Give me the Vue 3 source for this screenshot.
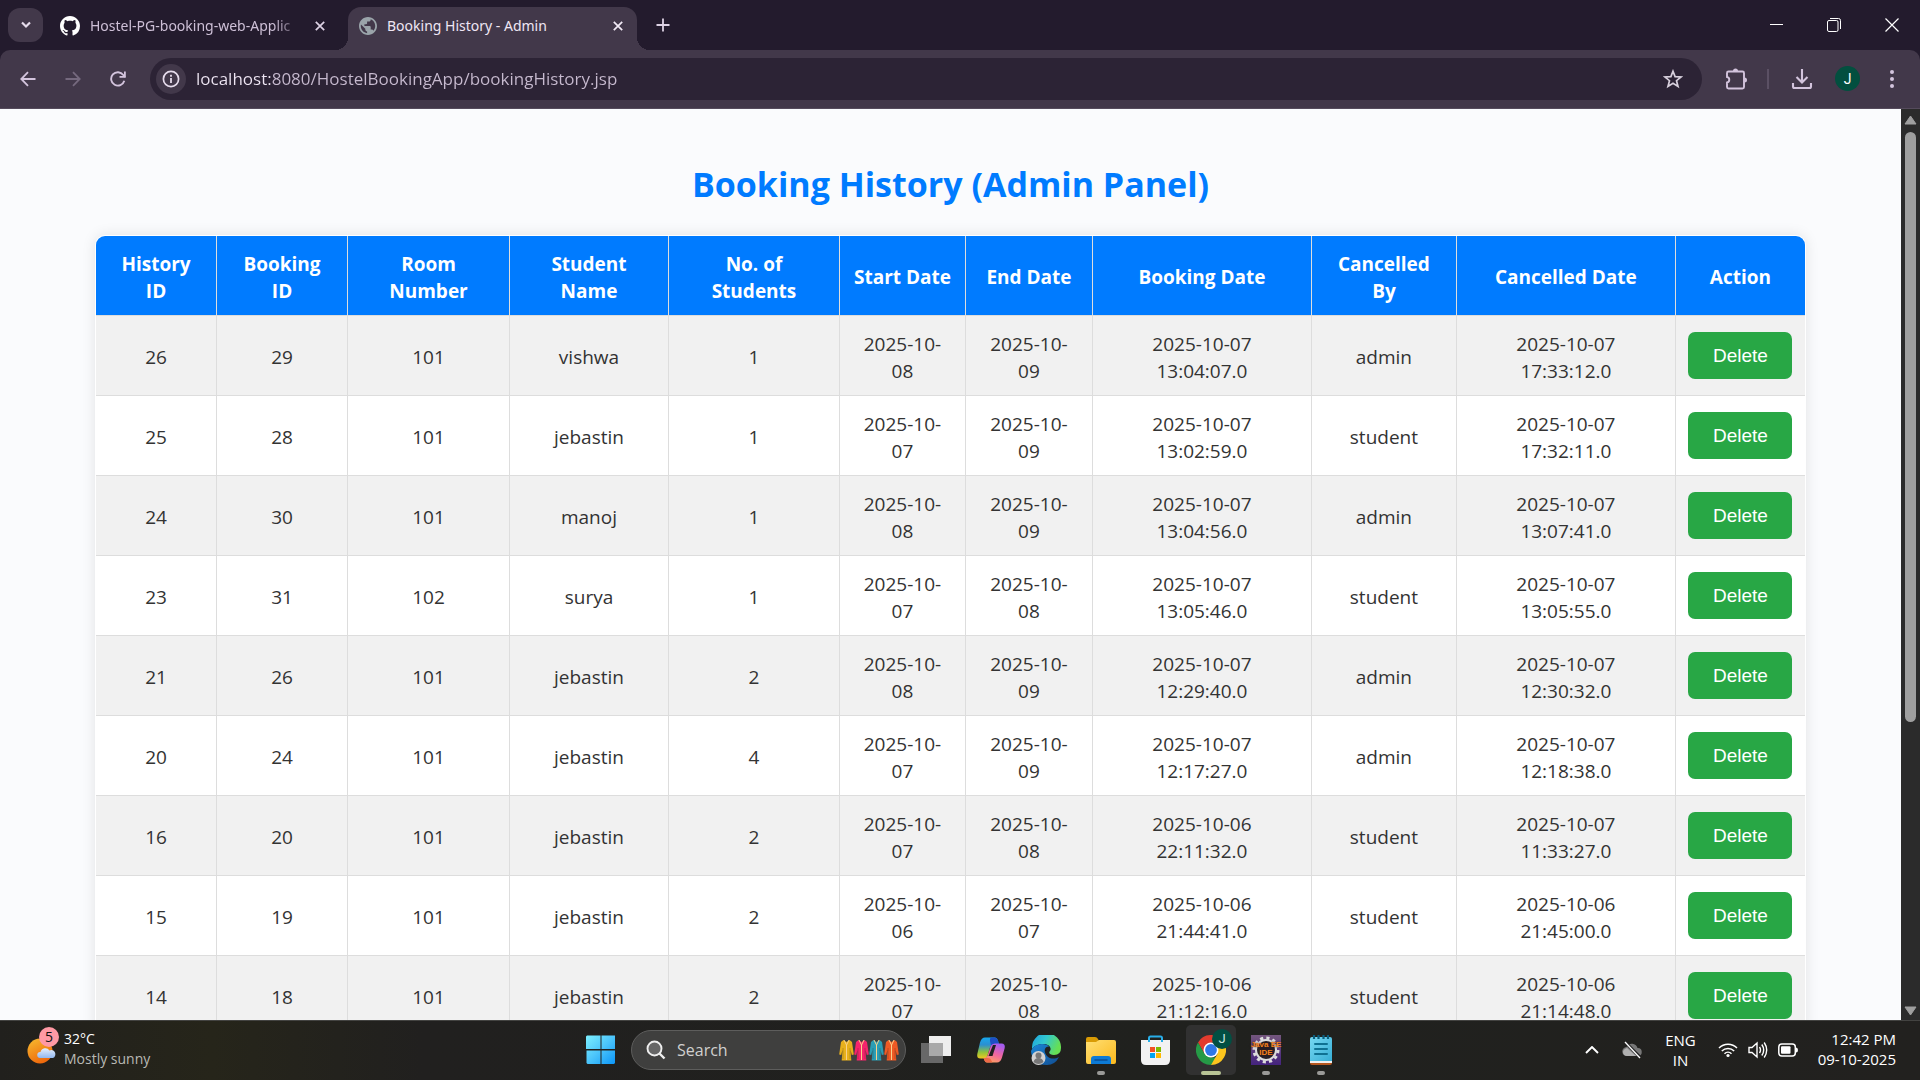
<script setup>
const columns = [
  { label: 'History ID', width: 121 },
  { label: 'Booking ID', width: 131 },
  { label: 'Room Number', width: 162 },
  { label: 'Student Name', width: 159 },
  { label: 'No. of Students', width: 171 },
  { label: 'Start Date', width: 126 },
  { label: 'End Date', width: 127 },
  { label: 'Booking Date', width: 219 },
  { label: 'Cancelled By', width: 145 },
  { label: 'Cancelled Date', width: 219 },
  { label: 'Action', width: 129 },
]
const total = columns.reduce((sum, c) => sum + c.width, 0)

const bookings = [
  [26, 29, 101, 'vishwa', 1, '2025-10-08', '2025-10-09', '2025-10-07 13:04:07.0', 'admin', '2025-10-07 17:33:12.0'],
  [25, 28, 101, 'jebastin', 1, '2025-10-07', '2025-10-09', '2025-10-07 13:02:59.0', 'student', '2025-10-07 17:32:11.0'],
  [24, 30, 101, 'manoj', 1, '2025-10-08', '2025-10-09', '2025-10-07 13:04:56.0', 'admin', '2025-10-07 13:07:41.0'],
  [23, 31, 102, 'surya', 1, '2025-10-07', '2025-10-08', '2025-10-07 13:05:46.0', 'student', '2025-10-07 13:05:55.0'],
  [21, 26, 101, 'jebastin', 2, '2025-10-08', '2025-10-09', '2025-10-07 12:29:40.0', 'admin', '2025-10-07 12:30:32.0'],
  [20, 24, 101, 'jebastin', 4, '2025-10-07', '2025-10-09', '2025-10-07 12:17:27.0', 'admin', '2025-10-07 12:18:38.0'],
  [16, 20, 101, 'jebastin', 2, '2025-10-07', '2025-10-08', '2025-10-06 22:11:32.0', 'student', '2025-10-07 11:33:27.0'],
  [15, 19, 101, 'jebastin', 2, '2025-10-06', '2025-10-07', '2025-10-06 21:44:41.0', 'student', '2025-10-06 21:45:00.0'],
  [14, 18, 101, 'jebastin', 2, '2025-10-07', '2025-10-08', '2025-10-06 21:12:16.0', 'student', '2025-10-06 21:14:48.0'],
]

const outfits = ['#e8b01c', '#f5246c', '#2b9db4', '#ee5a24']
const url = 'localhost:8080/HostelBookingApp/bookingHistory.jsp'
</script>

<template>
  <div class="desktop">
    <header class="tabstrip">
      <button class="tab-search" aria-label="Search tabs">
        <svg width="12" height="8" viewBox="0 0 12 8"><path d="M2 1.5 6 5.5l4-4" fill="none" stroke="#e6dcec" stroke-width="2.2" /></svg>
      </button>
      <div class="tab">
        <svg width="20" height="20" viewBox="0 0 16 16" fill="#fff"><path d="M8 0C3.58 0 0 3.58 0 8c0 3.54 2.29 6.53 5.47 7.59.4.07.55-.17.55-.38 0-.19-.01-.82-.01-1.49-2.01.37-2.53-.49-2.69-.94-.09-.23-.48-.94-.82-1.13-.28-.15-.68-.52-.01-.53.63-.01 1.08.58 1.23.82.72 1.21 1.87.87 2.33.66.07-.52.28-.87.51-1.07-1.78-.2-3.64-.89-3.64-3.95 0-.87.31-1.59.82-2.15-.08-.2-.36-1.02.08-2.12 0 0 .67-.21 2.2.82.64-.18 1.32-.27 2-.27s1.36.09 2 .27c1.53-1.04 2.2-.82 2.2-.82.44 1.1.16 1.92.08 2.12.51.56.82 1.27.82 2.15 0 3.07-1.87 3.75-3.65 3.95.29.25.54.73.54 1.48 0 1.07-.01 1.93-.01 2.2 0 .21.15.46.55.38A8.01 8.01 0 0 0 16 8c0-4.42-3.58-8-8-8z" /></svg>
        <span class="tab-title faded">Hostel-PG-booking-web-Applic</span>
        <button class="plain" aria-label="Close tab"><svg width="10" height="10" viewBox="0 0 10 10"><path d="m.8.8 8.4 8.4M9.2.8.8 9.2" stroke="#ddd2e4" stroke-width="1.7" /></svg></button>
      </div>
      <div class="tab active">
        <svg width="18" height="18" viewBox="2 2 20 20" fill="#9aa4aa"><path d="M12 2C6.48 2 2 6.48 2 12s4.48 10 10 10 10-4.48 10-10S17.52 2 12 2zm-1 17.93c-3.95-.49-7-3.85-7-7.93 0-.62.08-1.21.21-1.79L9 15v1c0 1.1.9 2 2 2v1.93zm6.9-2.54c-.26-.81-1-1.39-1.9-1.39h-1v-3c0-.55-.45-1-1-1H8v-2h2c.55 0 1-.45 1-1V7h2c1.1 0 2-.9 2-2v-.41c2.93 1.19 5 4.06 5 7.41 0 2.08-.8 3.97-2.1 5.39z" /></svg>
        <span class="tab-title">Booking History - Admin</span>
        <button class="plain" aria-label="Close tab"><svg width="10" height="10" viewBox="0 0 10 10"><path d="m.8.8 8.4 8.4M9.2.8.8 9.2" stroke="#f2eaf6" stroke-width="1.7" /></svg></button>
      </div>
      <button class="plain new-tab" aria-label="New tab"><svg width="14" height="14" viewBox="0 0 14 14"><path d="M7 .5v13M.5 7h13" stroke="#ddd2e4" stroke-width="1.8" /></svg></button>
      <div class="window-controls">
        <button class="plain" aria-label="Minimize"><svg width="13" height="13" viewBox="0 0 13 13"><path d="M0 5.5h13" stroke="#fff" /></svg></button>
        <button class="plain" aria-label="Restore"><svg width="14" height="14" viewBox="0 0 14 14" fill="none" stroke="#fff"><rect x=".5" y="2.5" width="10.5" height="11" rx="1.5" /><path d="M3 .5h8.5a2 2 0 0 1 2 2V11" /></svg></button>
        <button class="plain" aria-label="Close"><svg width="14" height="14" viewBox="0 0 14 14"><path d="m.5.5 13 13m0-13-13 13" stroke="#fff" stroke-width="1.2" /></svg></button>
      </div>
    </header>

    <nav class="toolbar">
      <div class="nav-buttons">
        <button class="plain" aria-label="Back"><svg width="16" height="16" viewBox="0 0 16 16"><path d="M15.5 8H1.5M8 1.2 1.3 8 8 14.8" fill="none" stroke="#d3c4dd" stroke-width="1.8" /></svg></button>
        <button class="plain" aria-label="Forward"><svg width="16" height="16" viewBox="0 0 16 16"><path d="M.5 8h14M8 1.2 14.7 8 8 14.8" fill="none" stroke="#75697e" stroke-width="1.8" /></svg></button>
        <button class="plain" aria-label="Reload"><svg width="16" height="16" viewBox="0 0 16 16"><path d="M14.3 9.8A6.7 6.7 0 1 1 13.3 4L15 6" fill="none" stroke="#d3c4dd" stroke-width="1.9" /><path d="M15.8.5v6.3H9.5V5H14V.5z" fill="#d3c4dd" /></svg></button>
      </div>
      <div class="omnibox">
        <button class="site-info" aria-label="Site information"><svg width="18" height="18" viewBox="0 0 18 18"><circle cx="9" cy="9" r="7.6" fill="none" stroke="#e6dcec" stroke-width="1.7" /><path d="M9 8v5M9 4.8v1.9" stroke="#e6dcec" stroke-width="1.8" /></svg></button>
        <input class="url" type="text" aria-label="Address" :value="url" />
        <button class="plain" aria-label="Bookmark"><svg width="20" height="20" viewBox="0 0 20 20"><path d="m10 2.2 2.1 5.4 5.9.4-4.5 3.7 1.5 5.7-5-3.2-5 3.2 1.5-5.7L2 8l5.9-.4z" fill="none" stroke="#d8d0dd" stroke-width="1.7" /></svg></button>
      </div>
      <div class="tools">
        <button class="plain" aria-label="Extensions"><svg width="22" height="22" viewBox="0 0 22 22"><path d="M3.500 3.500h14A1.500 1.500 0 0 1 19 5v14a1.500 1.500 0 0 1-1.500 1.500h-14A1.500 1.500 0 0 1 2 19v-4.500a2.800 2.800 0 0 0 0-5.500V5a1.500 1.500 0 0 1 1.500-1.500z" fill="none" stroke="#d3c4dd" stroke-width="1.900" /><path d="M8 3a2.500 2.500 0 0 1 5 0zM19.500 9.500a2.500 2.500 0 0 1 0 5z" fill="#d3c4dd" /></svg></button>
        <span class="divider"></span>
        <button class="plain" aria-label="Downloads"><svg width="22" height="22" viewBox="0 0 22 22"><path d="M11 1v13M5.5 9l5.5 5.5L16.5 9M2 15v3.500A1.500 1.500 0 0 0 3.500 20h15a1.500 1.500 0 0 0 1.500-1.500V15" fill="none" stroke="#d3c4dd" stroke-width="2.1" /></svg></button>
        <button class="avatar" aria-label="Profile">J</button>
        <button class="plain" aria-label="Menu"><svg width="4" height="20" viewBox="0 0 4 20" fill="#d3c4dd"><circle cx="2" cy="3" r="2" /><circle cx="2" cy="10" r="2" /><circle cx="2" cy="17" r="2" /></svg></button>
      </div>
    </nav>

    <div class="viewport">
      <main class="page">
        <h2>Booking History (Admin Panel)</h2>
        <div class="card">
          <table>
            <colgroup>
              <col v-for="c in columns" :key="c.label" :style="{ width: (c.width / total) * 100 + '%' }" />
            </colgroup>
            <thead>
              <tr><th v-for="c in columns" :key="c.label" scope="col">{{ c.label }}</th></tr>
            </thead>
            <tbody>
              <tr v-for="row in bookings" :key="row[0]">
                <td v-for="(cell, i) in row" :key="i">{{ cell }}</td>
                <td class="action"><button class="delete">Delete</button></td>
              </tr>
            </tbody>
          </table>
        </div>
      </main>
      <div class="scrollbar" aria-hidden="true">
        <svg width="13" height="10" viewBox="0 0 13 10"><path d="M6.5 1 12 9H1z" fill="#9f9f9f" stroke="#9f9f9f" stroke-linejoin="round" /></svg>
        <div class="track"><div class="thumb"></div></div>
        <svg width="13" height="10" viewBox="0 0 13 10"><path d="M6.5 9 1 1h11z" fill="#9f9f9f" stroke="#9f9f9f" stroke-linejoin="round" /></svg>
      </div>
    </div>

    <footer class="taskbar">
      <div class="weather">
        <div class="weather-icon">
          <svg width="30" height="36" viewBox="0 0 30 36">
            <defs>
              <linearGradient id="sun" x1="0" y1="0" x2=".5" y2="1"><stop offset="0" stop-color="#f8bd30" /><stop offset="1" stop-color="#ee690c" /></linearGradient>
              <linearGradient id="cloud" x1="0" y1="0" x2="0" y2="1"><stop offset="0" stop-color="#e6effc" /><stop offset="1" stop-color="#92b8ee" /></linearGradient>
            </defs>
            <circle cx="13" cy="22" r="12.5" fill="url(#sun)" />
            <path d="M13 29a3 3 0 0 1 .5-6 5 5 0 0 1 9-1.500 3.800 3.800 0 0 1 3.500 7.500z" fill="url(#cloud)" />
          </svg>
          <span class="badge">5</span>
        </div>
        <div class="weather-text"><span>32°C</span><span class="dim">Mostly sunny</span></div>
      </div>

      <div class="apps">
        <button class="app" aria-label="Start">
          <svg width="30" height="30" viewBox="0 0 30 30">
            <defs><linearGradient id="win" x1="0" y1="0" x2="1" y2="1"><stop offset="0" stop-color="#7df0ff" /><stop offset=".5" stop-color="#4cc5fb" /><stop offset="1" stop-color="#0c96f8" /></linearGradient></defs>
            <path d="M1 .5h13.500V14H0V1.500zM15.500.5H29v13.500H15.500zM.5 15.500h14V29H1.500l-1-1zM15.500 15.500H29V28l-1 1H15.500z" fill="url(#win)" />
          </svg>
        </button>
        <label class="search">
          <svg width="20" height="20" viewBox="0 0 20 20"><circle cx="8.5" cy="8.5" r="7" fill="#666" stroke="#eee" stroke-width="1.9" /><path d="m13.5 13.5 5 5" stroke="#eee" stroke-width="2.4" /></svg>
          <input type="text" placeholder="Search" aria-label="Search" />
          <span class="outfits">
            <svg v-for="color in outfits" :key="color" width="15" height="22" viewBox="0 0 15 22">
              <path d="M4.500 1 7.500 3l3-2 2.500 2 1.800 12.500-2 .5-1.200-5 .7 10.500H2.700L3.400 11l-1.200 5-2-.5L2 3z" :fill="color" />
              <path d="m5 1 2.500 5L10 1M7.500 6v15" fill="none" stroke="#f8d28c" stroke-width="1" />
              <path d="M4 9v11M11 9v11" stroke="#000" stroke-opacity=".18" />
            </svg>
          </span>
        </label>
        <button class="app" aria-label="Task view">
          <svg width="30" height="30" viewBox="0 0 30 30"><path d="M8 1h22v20H8z" fill="#eee" /><path d="M0 8h22v20H0z" fill="#686868" /><path d="M8 8h14v13H8z" fill="#a9a9a9" /></svg>
        </button>
        <button class="app" aria-label="Copilot">
          <svg width="30" height="30" viewBox="0 0 30 30">
            <defs>
              <linearGradient id="cpa" x1="0" y1="0" x2="0" y2="1"><stop offset="0" stop-color="#17a8ee" /><stop offset=".35" stop-color="#2b8fd0" /><stop offset=".7" stop-color="#8fc43c" /><stop offset="1" stop-color="#f0c820" /></linearGradient>
              <linearGradient id="cpb" x1=".6" y1="0" x2=".2" y2="1"><stop offset="0" stop-color="#a45cf0" /><stop offset=".5" stop-color="#f0669f" /><stop offset="1" stop-color="#ffa85c" /></linearGradient>
            </defs>
            <path d="M9 2.500h10q2 0 3 3l1 4h-5q-3 0-4 3l-2.500 8q-.8 3-3.500 3H4.500q-4 0-3.200-4.500L4 7.500q1.500-5 5-5" fill="url(#cpa)" />
            <path d="M15 2.500h4q2 0 3 3l1 4h-5q-2 0-3 1.500L14 6q-.5-3 1-3.500" fill="#1d4fc4" />
            <path d="M21 27.500H11q-2 0-2.500-2l-.8-2.500q3 .3 4-3l3-9Q16 8.500 19 8.500h6.500q4 0 3.200 4.500L26 22.500q-1.500 5-5 5" fill="url(#cpb)" />
            <path d="M17 10h3l-3.500 11h-4z" fill="#1f211e" />
            <path d="M7.500 23h4q2 0 3 1l2 3.500H11q-2 0-2.500-2z" fill="#ee6a48" />
          </svg>
        </button>
        <button class="app" aria-label="Edge">
          <svg width="30" height="30" viewBox="0 0 30 30">
            <defs>
              <linearGradient id="edt" x1="0" y1="0" x2="1" y2=".4"><stop offset="0" stop-color="#1c9fe0" /><stop offset=".5" stop-color="#32c8cf" /><stop offset="1" stop-color="#66df54" /></linearGradient>
              <linearGradient id="edb" x1="0" y1="0" x2="1" y2="1"><stop offset="0" stop-color="#1b87d8" /><stop offset="1" stop-color="#114d91" /></linearGradient>
            </defs>
            <path d="M1 12A14.500 14.500 0 0 1 30 13q0 7-7 7c-4 0-6-2-4-4 2-3-1-7-6-7-6 0-10 2-12 5z" fill="url(#edt)" />
            <path d="M0 16q3-7 11-7 6 0 7 3c-3-1-5 2-4 5.500 1.500 5.500 8 8 14 4.500q-4 8-12 8Q1 30 0 16" fill="url(#edb)" />
            <circle cx="7.500" cy="23" r="7" fill="#d2d2d2" /><circle cx="7.500" cy="20.500" r="3" fill="#777" /><path d="M2.500 27q1-4 5-4t5 4a7 7 0 0 1-10 0" fill="#777" />
          </svg>
        </button>
        <button class="app running" aria-label="File Explorer">
          <svg width="30" height="30" viewBox="0 0 30 30">
            <defs><linearGradient id="fold" x1="0" y1="0" x2="1" y2="1"><stop offset="0" stop-color="#ffdf74" /><stop offset="1" stop-color="#fbb91d" /></linearGradient></defs>
            <path d="M0 4q0-2 2-2h7q2 0 3 2l1 2h15v6H0z" fill="#d99b05" /><path d="M13 5h15q2 0 2 2v20q0 2-2 2H2q-2 0-2-2V7h10z" fill="url(#fold)" />
            <path d="M5 29v-5q0-3 3-3h14q3 0 3 3v5z" fill="#0d7bd6" /><path d="M9 25h12" stroke="#0a4f96" stroke-width="1.5" stroke-linecap="round" />
          </svg>
        </button>
        <button class="app" aria-label="Microsoft Store">
          <svg width="30" height="30" viewBox="0 0 30 30">
            <path d="M0 5h29v20q0 5-5 5H5q-5 0-5-5z" fill="#f2f2f2" /><path d="M8 7V3q0-1.500 1.500-1.500h10Q21 1.500 21 3v4" fill="none" stroke="#28aee8" stroke-width="2" />
            <path d="M9 12h5v5H9z" fill="#f25022" /><path d="M15 12h5v5h-5z" fill="#7fba00" /><path d="M9 18h5v5H9z" fill="#00a4ef" /><path d="M15 18h5v5h-5z" fill="#ffb900" />
          </svg>
        </button>
        <button class="app running current" aria-label="Chrome">
          <svg width="30" height="30" viewBox="0 0 30 30">
            <path d="M2 7.500a15 15 0 0 1 26 0H15L8.500 18.700z" fill="#e33b2e" /><path d="M2 7.500 8.500 18.700 15 22.500h6.500L15 30A15 15 0 0 1 2 7.500" fill="#259a46" /><path d="M28 7.500A15 15 0 0 1 15 30l6.500-11.300V7.500z" fill="#fcc51d" />
            <circle cx="15" cy="15" r="7.5" fill="#fff" /><circle cx="15" cy="15" r="5.9" fill="#2f78e8" />
          </svg>
          <span class="profile-badge">J</span>
        </button>
        <button class="app running" aria-label="Java EE IDE">
          <span class="java">
            <svg width="30" height="30" viewBox="0 0 30 30">
              <defs><linearGradient id="jee" x1="0" y1="0" x2="0" y2="1"><stop offset="0" stop-color="#74567d" /><stop offset="1" stop-color="#44237e" /></linearGradient></defs>
              <path d="M0 0h30v30H0z" fill="url(#jee)" /><circle cx="15" cy="15" r="12" fill="none" stroke="#ddd" stroke-width="3" stroke-dasharray="3.14 3.14" /><circle cx="15" cy="15" r="10" fill="#282028" stroke="#ddd" stroke-width="2" />
            </svg>
            <span class="java-text">Java EE<br />IDE</span>
          </span>
        </button>
        <button class="app running" aria-label="Notepad">
          <svg width="30" height="30" viewBox="0 0 30 30">
            <defs><linearGradient id="note" x1="0" y1="0" x2="1" y2="1"><stop offset="0" stop-color="#77d8f2" /><stop offset="1" stop-color="#37aed5" /></linearGradient></defs>
            <path d="M4 25h22v3q0 2-2 2H6q-2 0-2-2z" fill="#b4561e" /><path d="M4 22h22v6H4z" fill="#eee" /><path d="M4 4q0-2 2-2h18q2 0 2 2v22H4z" fill="url(#note)" />
            <path d="M8 0v4M12.500 0v4M17.500 0v4M22 0v4" stroke="#0b5d7c" stroke-width="2.2" /><path d="M9 9h12M9 14h12M9 19h12" stroke="#0f7192" stroke-width="2" stroke-linecap="round" />
          </svg>
        </button>
      </div>

      <div class="tray">
        <svg width="14" height="8" viewBox="0 0 14 8"><path d="m1 7 6-6 6 6" fill="none" stroke="#fff" stroke-width="1.9" /></svg>
        <svg class="onedrive" width="20" height="18" viewBox="0 0 20 18"><path d="M5 15a4.500 4.500 0 0 1-.5-9 6 6 0 0 1 11 1A4 4 0 0 1 16 15z" fill="#777" /><path d="M2 14q-3-5 3-7l9 8H5q-2 0-3-1" fill="#b0b0b0" /><path d="m3 1 15 15" stroke="#222" stroke-width="3" /><path d="m3 1 15 16" stroke="#fff" stroke-width="1.3" /></svg>
        <div class="lang"><span>ENG</span><span>IN</span></div>
        <div class="status">
          <svg width="20" height="16" viewBox="0 0 20 16" fill="none" stroke="#fff" stroke-width="1.5"><path d="M1 6a12.500 12.500 0 0 1 18 0M3.800 9a8.800 8.800 0 0 1 12.400 0M6.500 11.700a5 5 0 0 1 7 0" /><circle cx="10" cy="13.5" r="1.6" fill="#fff" stroke="none" /></svg>
          <svg width="20" height="18" viewBox="0 0 20 18" fill="none" stroke="#fff" stroke-width="1.4"><path d="M1 6.500h3L9 2v14l-5-4.500H1zM11.500 6q2 3 0 6M13.800 3.500q3.800 5.500 0 11M16.200 1.500q5 7.500 0 15" /></svg>
          <svg width="20" height="14" viewBox="0 0 20 14"><rect x=".8" y="1" width="16.5" height="12" rx="3" fill="none" stroke="#fff" stroke-width="1.5" /><rect x="3" y="3.2" width="9.5" height="7.6" rx="1" fill="#fff" /><path d="M18 4.500q2 0 2 2.500t-2 2.500z" fill="#fff" /></svg>
        </div>
        <div class="clock"><span>12:42 PM</span><span>09-10-2025</span></div>
      </div>
    </footer>
  </div>
</template>

<style>
body {
  margin: 0;
  overflow: hidden;
}
</style>

<style scoped>
.desktop {
  display: flex;
  flex-direction: column;
  height: 100vh;
  background: #231b2d;
  font-family: "Segoe UI", "Open Sans", "Noto Sans", sans-serif;
}
* {
  box-sizing: border-box;
}
svg {
  display: block;
  flex: none;
}
button {
  font-family: inherit;
  border: 0;
  padding: 0;
}
.plain {
  display: flex;
  background: none;
}

/* Tab strip */
.tabstrip {
  display: flex;
  align-items: center;
  flex: none;
  height: 50px;
  padding-left: 8px;
}
.tab-search {
  display: flex;
  align-items: center;
  justify-content: center;
  width: 35px;
  height: 34px;
  border-radius: 12px;
  background: #42384a;
}
.tab {
  display: flex;
  align-items: center;
  gap: 10px;
  align-self: flex-end;
  height: 43px;
  width: 305px;
  padding: 0 23px 6px 17px;
  color: #cdbfd6;
  font-family: "Segoe UI", "Noto Sans", "Open Sans", sans-serif;
  font-size: 14px;
}
.tab-title {
  flex: 1;
  overflow: hidden;
  white-space: nowrap;
}
.faded {
  mask-image: linear-gradient(to right, #000 85%, transparent);
}
.tab.active {
  position: relative;
  width: 289px;
  padding: 0 14px 6px 11px;
  border-radius: 13px 13px 0 0;
  background: #42384a;
  color: #efe6f4;
}
.tab.active::before,
.tab.active::after {
  content: "";
  position: absolute;
  bottom: 0;
  width: 13px;
  height: 13px;
}
.tab.active::before {
  right: 100%;
  background: radial-gradient(circle at 0 0, transparent 13px, #42384a 13px);
}
.tab.active::after {
  left: 100%;
  background: radial-gradient(circle at 100% 0, transparent 13px, #42384a 13px);
}
.new-tab {
  margin-left: 19px;
}
.window-controls {
  display: flex;
  align-items: center;
  gap: 44px;
  margin-left: auto;
  padding-right: 21px;
}

/* Toolbar */
.toolbar {
  display: flex;
  align-items: center;
  flex: none;
  height: 59px;
  padding: 0 26px 1px 20px;
  border-radius: 10px 10px 0 0;
  border-bottom: 1px solid #554b5c;
  background: #42384a;
}
.nav-buttons {
  display: flex;
  gap: 29px;
  margin-right: 24px;
}
.omnibox {
  display: flex;
  align-items: center;
  flex: 1;
  height: 42px;
  padding: 0 19px 0 6px;
  border-radius: 21px;
  background: #2c2335;
}
.site-info {
  display: flex;
  align-items: center;
  justify-content: center;
  width: 30px;
  height: 30px;
  border-radius: 50%;
  background: #42384a;
}
.url {
  flex: 1;
  height: 30px;
  margin-left: 10px;
  padding: 0;
  border: 0;
  outline: 0;
  font-family: inherit;
  font-size: 17px;
  color: transparent;
  background: linear-gradient(to right, #efe6f4 76px, #c7bacf 76px);
  background-clip: text;
}
.tools {
  display: flex;
  align-items: center;
  margin-left: 23px;
}
.divider {
  width: 2px;
  height: 20px;
  margin: 0 22px 0 20px;
  background: #5b5064;
}
.avatar {
  width: 25px;
  height: 25px;
  margin: 0 30px 0 22px;
  border-radius: 50%;
  background: #024f3f;
  color: #fff;
  font-family: Roboto, sans-serif;
  font-size: 14px;
}

/* Page */
.viewport {
  display: flex;
  flex: 1;
  min-height: 0;
}
.page {
  flex: 1;
  overflow: hidden;
  background: #fafbfd;
}
h2 {
  margin: 51px 0 26px;
  color: #007bff;
  font-size: 34px;
  line-height: 49px;
  text-align: center;
}
.card {
  width: 90%;
  margin: 0 auto;
  overflow: hidden;
  border: 1px solid #fff;
  border-radius: 10px;
  background: #fff;
  box-shadow: 0 0 14px rgba(0, 0, 0, 0.1);
}
table {
  width: 100%;
  table-layout: fixed;
  border-spacing: 0;
  color: #333;
  font-size: 19px;
  line-height: 27px;
  text-align: center;
}
th,
td {
  height: 80px;
  padding: 4px 14px 0;
  border-right: 1px solid #ddd;
  border-bottom: 1px solid #ddd;
}
th {
  background: #007bff;
  color: #fff;
}
th:nth-child(6),
th:nth-child(7) {
  padding: 4px 4px 0;
}
th:last-child,
td:last-child {
  border-right: 0;
}
tbody tr:nth-child(odd) {
  background: #f1f1f1;
}
td.action {
  padding: 0;
}
.delete {
  display: block;
  width: 104px;
  height: 47px;
  margin: 0 auto;
  border-radius: 7px;
  background: #28a745;
  color: #fff;
  font-family: "Liberation Sans", Arial, sans-serif;
  font-size: 19px;
}
.scrollbar {
  display: flex;
  flex-direction: column;
  align-items: center;
  flex: none;
  width: 19px;
  padding: 6px 0 4px;
  background: #2b2b2b;
}
.track {
  flex: 1;
  width: 11px;
  padding: 7px 0;
}
.thumb {
  height: 68%;
  border-radius: 6px;
  background: #9f9f9f;
}

/* Taskbar */
.taskbar {
  display: grid;
  grid-template-columns: 1fr auto 1fr;
  align-items: center;
  flex: none;
  height: 60px;
  padding: 0 0 2px 2px;
  border-top: 1px solid #434341;
  background: linear-gradient(to right, #21201d, #26251a 11%, #21201f 22%, #20211e 62%, #22211f);
  color: #fff;
  font-size: 15px;
  line-height: 20px;
}
.weather {
  display: flex;
  align-items: center;
  gap: 7px;
  padding-left: 25px;
}
.weather-icon {
  position: relative;
  padding-bottom: 6px;
}
.badge {
  position: absolute;
  top: -2px;
  right: -2px;
  width: 20px;
  height: 20px;
  border-radius: 50%;
  background: #ff99a4;
  color: #111;
  font-size: 14px;
  text-align: center;
}
.weather-text,
.lang,
.clock {
  display: flex;
  flex-direction: column;
}
.weather-text,
.clock {
  padding-bottom: 2px;
}
.weather-text {
  font-size: 14px;
}
.dim {
  color: #b9b9b4;
}
.apps {
  display: flex;
  align-items: center;
  gap: 5px;
}
.app {
  position: relative;
  display: flex;
  align-items: center;
  justify-content: center;
  width: 50px;
  height: 50px;
  border-radius: 5px;
  background: none;
}
.running::after {
  content: "";
  position: absolute;
  bottom: 0;
  width: 8px;
  height: 4px;
  border-radius: 2px;
  background: #9a9a98;
}
.current {
  background: #313131;
}
.current::after {
  width: 20px;
  background: #b9c596;
}
.profile-badge {
  position: absolute;
  top: 4px;
  right: 4px;
  width: 20px;
  height: 20px;
  border-radius: 50%;
  background: #024f43;
  color: #cfe8e0;
  font-family: Roboto, sans-serif;
  font-size: 13px;
  line-height: 20px;
}
.java {
  position: relative;
}
.java-text {
  position: absolute;
  inset: 6px -4px auto;
  color: #f58220;
  font-family: "Liberation Sans", Arial, sans-serif;
  font-size: 8px;
  font-weight: bold;
  line-height: 8px;
  text-align: center;
  text-shadow: 0 0 2px #301808;
}
.search {
  display: flex;
  align-items: center;
  width: 275px;
  height: 40px;
  padding: 0 6px 0 14px;
  border: 1px solid #5d5d5c;
  border-radius: 20px;
  background: #3f3f3e;
}
.search input {
  flex: 1;
  min-width: 0;
  margin-left: 11px;
  padding: 0;
  border: 0;
  outline: 0;
  background: none;
  font-family: inherit;
  font-size: 16px;
}
.search input::placeholder {
  color: #d0d0cf;
}
.outfits {
  display: flex;
}
.tray {
  display: flex;
  align-items: center;
  justify-content: flex-end;
  padding-right: 24px;
}
.onedrive {
  margin-left: 23px;
}
.lang {
  align-items: center;
  margin-left: 23px;
}
.status {
  display: flex;
  align-items: center;
  gap: 10px;
  margin: 0 20px 0 22px;
}
.clock {
  align-items: flex-end;
}
</style>
